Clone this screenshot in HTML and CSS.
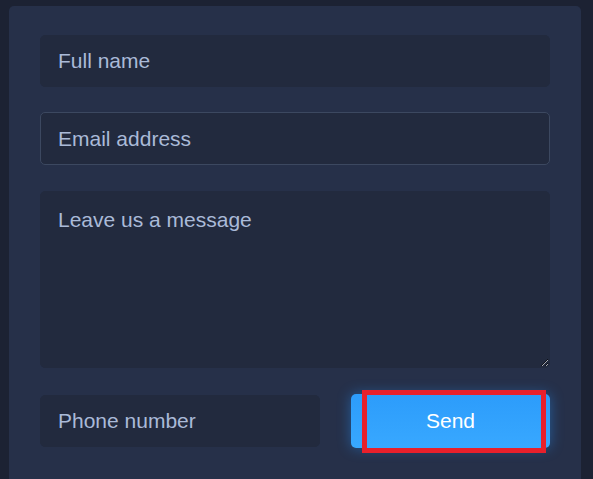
FILE: index.html
```html
<!DOCTYPE html>
<html lang="en">
<head>
<meta charset="utf-8">
<title>Contact form</title>
<link rel="stylesheet" href="styles.css">
</head>
<body>
<div class="card">
  <form class="form">
    <input class="field" type="text" placeholder="Full name">
    <input class="field field--focus" type="email" placeholder="Email address">
    <textarea class="field field--area" placeholder="Leave us a message"></textarea>
    <div class="row">
      <input class="field" type="tel" placeholder="Phone number">
      <div class="send-wrap">
        <button class="send" type="button">Send</button>
        <span class="highlight"></span>
      </div>
    </div>
  </form>
</div>
</body>
</html>
```
FILE: styles.css
```css
html, body {
  margin: 0;
  padding: 0;
}
body {
  background: #1c2233;
  font-family: "Liberation Sans", Arial, sans-serif;
  height: 479px;
  overflow: hidden;
}
.card {
  margin: 6px 0 0 9px;
  width: 572px;
  box-sizing: border-box;
  min-height: 600px;
  background: #263049;
  border-radius: 5px 5px 0 0;
  padding: 29px 31px 40px;
}
.form {
  display: flex;
  flex-direction: column;
  gap: 25px;
}
.field {
  display: block;
  box-sizing: border-box;
  width: 100%;
  height: 52px;
  margin: 0;
  padding: 0 17px;
  background: #222a3e;
  border: 1px solid #222a3e;
  border-radius: 5px;
  color: #dfe6f3;
  font-family: "Liberation Sans", Arial, sans-serif;
  font-size: 21px;
  outline: none;
}
.field::placeholder {
  color: #aabad8;
  opacity: 1;
}
.field--focus {
  border-color: #3c4860;
  height: 53px;
  margin-bottom: 1px;
}
.field--area {
  height: 177px;
  padding: 15px 17px;
  line-height: 25px;
  resize: vertical;
}
.row {
  display: grid;
  grid-template-columns: 280px 1fr;
  gap: 31px;
  margin-top: 2px;
}
.send-wrap {
  position: relative;
}
.send {
  display: block;
  width: 100%;
  height: 54px;
  margin-top: -1px;
  border: none;
  border-radius: 5px;
  background: linear-gradient(180deg, #2c9cfb 0%, #38a8ff 100%);
  box-shadow: 0 0 14px rgba(40, 150, 255, 0.45);
  color: #ffffff;
  font-family: "Liberation Sans", Arial, sans-serif;
  font-size: 21px;
  cursor: pointer;
}
.highlight {
  position: absolute;
  left: 11px;
  top: -5px;
  width: 184px;
  height: 63px;
  box-sizing: border-box;
  border: 5px solid #e8202b;
  pointer-events: none;
}
```
